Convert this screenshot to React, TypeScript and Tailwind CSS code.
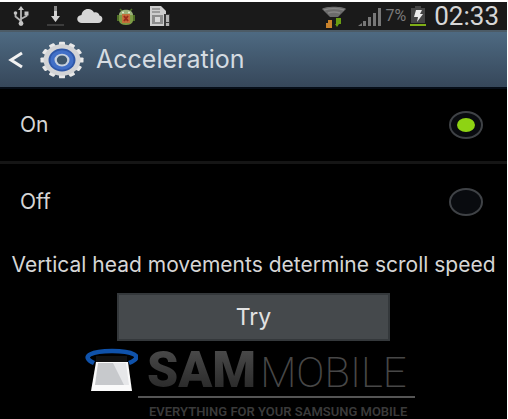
import { useState } from "react";

const options = ["On", "Off"];

function NotificationIcons() {
  return (
    <div className="flex items-center gap-[13px]">
      <svg width="18" height="22" viewBox="0 0 18 22" fill="none" stroke="#b4b4b4" strokeWidth="1.8" aria-label="USB">
        <path d="M9 3v16M3.5 9v2.5L9 16M14.5 9v2L9 14" />
        <path d="M9 1l3 4H6z" fill="#c4c4c4" stroke="none" />
        <circle cx="9" cy="18.5" r="2.4" fill="#c4c4c4" stroke="none" />
        <circle cx="3.5" cy="8" r="1.8" fill="#c4c4c4" stroke="none" />
        <path d="M12.5 6.5h4v4h-4z" fill="#c4c4c4" stroke="none" />
      </svg>
      <svg className="ml-1" width="17" height="22" viewBox="0 0 17 22" aria-label="Download">
        <path d="M7 1h3v5H7z" fill="#8a8a8a" />
        <path d="M7 6h3v5h3l-4.500 6L4 11h3z" fill="#d2d2d2" />
        <path d="M0 19h17v2H0z" fill="#3c3c3c" />
      </svg>
      <svg width="26" height="22" viewBox="0 0 26 22" aria-label="Cloud">
        <path d="M5 18a4.500 4 0 0 1-.5-8C5 6 8 3.500 12 4c2.500.2 4 1.800 5 3.500 3-.8 5 .8 5.500 3C27 11.500 26 18 21 18z" fill="#d6d6d6" />
      </svg>
      <svg width="20" height="22" viewBox="0 0 20 22" aria-label="Android debugging">
        <path d="M4 4l2 2M16 4l-2 2" stroke="#4f7027" strokeWidth="1.500" />
        <path d="M3 10C3 3 17 3 17 10z" fill="#9bb27a" />
        <path d="M1 10h2v6H1zM17 10h2v6h-2z" fill="#4f7027" />
        <path d="M3 10h14v6q-1 4-7 4t-7-4z" fill="#7d9a45" />
        <path d="M6 9h8v9H6z" fill="#c2703a" />
        <path d="M8 11l4 5M12 11l-4 5" stroke="#9c2a1c" strokeWidth="2" />
        <circle cx="7" cy="7.500" r="1" fill="#e6eed2" />
        <circle cx="13" cy="7.500" r="1" fill="#e6eed2" />
      </svg>
      <svg width="22" height="22" viewBox="0 0 22 22" aria-label="Storage">
        <path d="M1 1h11l5 5v15H1z" fill="#cdcdcd" />
        <path d="M3 4h8M3 7h8" stroke="#8a8a8a" strokeWidth="1.500" />
        <path d="M3 10h11v9H3z" fill="#8d8d8d" />
        <path d="M6 12h5v5H6z" fill="#d8d8d8" />
        <path d="M15 9h6v12h-6z" fill="#3a3a3a" />
        <path d="M17 10h3v7h-3zM17 18h3v3h-3z" fill="#b4b4b4" />
      </svg>
    </div>
  );
}

function StatusBar() {
  return (
    <div className="flex h-7 items-center justify-between bg-[#1a1a1a] pl-3 pr-2">
      <NotificationIcons />
      <div className="flex items-center">
        <svg className="mr-3" width="24" height="24" viewBox="0 0 24 24" aria-label="Wi-Fi">
          <path d="M0 5C2 2 22 2 24 5l-8 8H8z" fill="#6b6b6b" />
          <path d="M2 6q10-3 20 0M6 9q6-2 12 0" fill="none" stroke="#858585" strokeWidth="1.500" />
          <path d="M6 16h4v8H4v-5h2z" fill="#c9822b" />
          <path d="M14 14h5v6h-2l-2 3-2-3h1z" fill="#6a9e12" />
        </svg>
        <svg className="mr-1" width="24" height="22" viewBox="0 0 24 22" aria-label="Signal">
          <path d="M0 21h4v-3z" fill="#777" />
          <path d="M5 21v-5h3v5zM10 21v-9h3v9zM15 21V8h3v13zM20 21V3h3v18z" fill="#777" />
        </svg>
        <span className="mr-1 text-base text-[#7b7b7b]">7%</span>
        <svg className="mr-2" width="16" height="22" viewBox="0 0 16 22" aria-label="Charging">
          <path d="M5 1h6v2h4v15H1V3h4z" fill="#454545" />
          <path d="M6 5h6l-2 4h3l-6 8 1-5H4z" fill="#ededed" />
          <path d="M0 19h16v2H0z" fill="#7fae16" />
        </svg>
        <time className="text-[26px] leading-7 text-[#d6d6d6]">02:33</time>
      </div>
    </div>
  );
}

function SettingsIcon() {
  const teeth = [0, 30, 60, 90, 120, 150];
  return (
    <svg width="44" height="38" viewBox="0 0 44 38" aria-hidden="true">
      <g transform="translate(22 19) scale(1 .85)">
        {teeth.map((a) => (
          <rect key={a} x="-3" y="-21.500" width="6" height="43" rx="1" fill="#e8e8e8" transform={`rotate(${a})`} />
        ))}
        <circle r="18.500" fill="#d3d4d6" />
        <circle r="13.500" fill="#2e57a8" />
        <circle r="11.500" fill="#416fc7" />
        <circle r="7.500" fill="#c6d0de" />
        <circle r="5.200" fill="#3f566b" />
      </g>
    </svg>
  );
}

function TitleBar() {
  return (
    <header className="flex h-[59px] items-center border-b-2 border-t-2 border-b-[#060d17] border-t-[#4c5b66] bg-linear-to-b from-[#4e6a82] to-[#36475a] pl-2">
      <button type="button" aria-label="Back" className="mr-4">
        <svg width="16" height="18" viewBox="0 0 16 18" fill="none" stroke="#f2f2f2" strokeWidth="3">
          <path d="M14 2L3 9l11 7" />
        </svg>
      </button>
      <SettingsIcon />
      <h1 className="ml-3 text-[25px] text-[#d5dbe1]">Acceleration</h1>
    </header>
  );
}

function SamMobileLogo() {
  return (
    <div className="mt-[6px] flex pl-[85px] font-[Roboto,sans-serif]">
      <svg className="mt-px shrink-0" width="53" height="46" viewBox="0 0 53 46" aria-hidden="true">
        <path d="M9 15C-6 8 8 3 27 3s34 5 17 12" fill="none" stroke="#0f52ab" strokeWidth="4.500" />
        <path d="M11 8h31v6H11z" fill="#111" />
        <path d="M11 14h32l4 29H6z" fill="#fafafa" />
        <path d="M13 15h17l10 22H10z" fill="#c7c9cc" />
        <path d="M28 15h13l3 22h-5z" fill="#e6e7e9" />
      </svg>
      <div className="w-[277px]">
        <div className="flex items-baseline whitespace-nowrap border-b-2 border-[#555] pl-[9px]">
          <span className="bg-linear-to-b from-[#4c4c4c] to-[#272727] bg-clip-text text-[50px] leading-[46px] font-black text-transparent">SAM</span>
          <span className="ml-1 text-[42px] leading-[46px] font-extralight text-[#474747]">MOBILE</span>
        </div>
        <p className="mt-[6px] whitespace-nowrap pl-[11px] text-[13px] leading-4 font-semibold text-[#3a3a3a]">
          EVERYTHING FOR YOUR SAMSUNG MOBILE
        </p>
      </div>
    </div>
  );
}

export default function App() {
  const [selected, setSelected] = useState("On");

  return (
    <div className="h-screen overflow-hidden border-r border-t-2 border-white bg-black font-[Roboto,sans-serif]">
      <StatusBar />
      <div className="font-[Inter,sans-serif]">
        <TitleBar />
        <main>
          <div role="radiogroup" aria-label="Acceleration" className="divide-y-3 divide-[#151515]">
            {options.map((option) => (
              <label key={option} className="flex h-[75px] items-center justify-between pl-5 pr-6 text-[21px] text-[#d6d6d6]">
                {option}
                <input
                  type="radio"
                  name="acceleration"
                  value={option}
                  checked={selected === option}
                  onChange={() => setSelected(option)}
                  className="flex h-7 w-[34px] appearance-none items-center justify-center rounded-[50%] border-2 border-[#3f4246] bg-[#090b0f] before:h-[14px] before:w-[18px] before:rounded-[50%] checked:before:bg-[#8ed313]"
                />
              </label>
            ))}
          </div>
          <p className="mt-3 whitespace-nowrap text-center text-[21px] leading-7 text-[#d6d6d6]">
            Vertical head movements determine scroll speed
          </p>
          <button
            type="button"
            className="mx-auto mt-[14px] block h-12 w-[54%] border-2 border-[#34383b] bg-[#45494c] text-[23px] text-[#e2e2e2]"
          >
            Try
          </button>
          <SamMobileLogo />
        </main>
      </div>
    </div>
  );
}
